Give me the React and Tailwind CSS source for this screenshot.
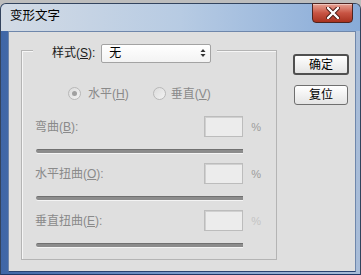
import React from "react";

function Radio({ checked }) {
  return (
    <span className="w-[13px] h-[13px] rounded-full border border-[#b8b8b8] bg-gradient-to-br from-[#dcdcdc] to-[#f2f2f2] flex items-center justify-center shrink-0">
      {checked && <span className="w-[5px] h-[5px] rounded-full bg-[#a0a0a0]" />}
    </span>
  );
}

function Section({ label, mt, pct = "%" }) {
  return (
    <div className={mt}>
      <div className="ml-[13px] flex items-center h-[21px] w-[226px]">
        <span className="flex-1 text-[12px] leading-[14px] text-[#8a8a8a]">{label}</span>
        <div className="w-[39px] h-[21px] border border-[#bcbcbc] bg-[#ececec] shadow-[inset_1px_1px_0_#d0d0d0]" />
        <span className="pl-[8px] text-[11px] leading-[12px] text-[#9c9c9c]">{pct}</span>
      </div>
      <div className="mt-[12px] ml-[14px] w-[207px] h-[4px] rounded-l-[2px] bg-[#8c8c8c] border-t border-[#707070] shadow-[0_1px_0_#f4f4f4]" />
    </div>
  );
}

export default function App() {
  return (
    <div className="w-[361px] h-[275px] overflow-hidden bg-[#bdbdbd] pt-[3px] font-['Liberation_Sans','Noto_Sans_CJK_SC',sans-serif]">
      <div className="w-[361px] h-[272px] rounded-t-[6px] border border-[#33445e] border-b-[#1f3766] bg-gradient-to-r from-[#3f66a6] via-[#7b9ccc] to-[#a9bdd8] flex flex-col">
        <div className="h-[27px] shrink-0 rounded-t-[5px] bg-gradient-to-r from-[#d3dbe5] via-[#b7cbe3] to-[#88abd8] flex items-start justify-between pl-[9px]">
          <span className="mt-[5px] text-[12.5px] leading-[14px] text-black">变形文字</span>
          <div className="-mt-[1px] mr-[7px] w-[41px] h-[20px] rounded-b-[4px] border border-[#4e2420] bg-gradient-to-b from-[#e6a294] via-[#c85443] to-[#a8321f] flex items-center justify-center shadow-[inset_0_1px_0_rgba(255,255,255,0.4)]">
            <svg width="14" height="12" viewBox="0 0 14 12">
              <path d="M2 1 L12 11 M12 1 L2 11" stroke="#4a1a14" strokeWidth="4.2" strokeLinecap="round" />
              <path d="M2 1 L12 11 M12 1 L2 11" stroke="#ffffff" strokeWidth="2.4" strokeLinecap="round" />
            </svg>
          </div>
        </div>
        <div className="ml-[7px] w-[348px] h-[241px] border border-[#6f87ab] border-b-[#2a4270] bg-[#dfdfdf] flex items-start">
          <div className="ml-[12px] mt-[18px] w-[256px] h-[210px] border border-[#b4b4b4] shadow-[inset_1px_1px_0_#f6f6f6] flex flex-col">
            <div className="-mt-[8px] ml-[11px] pl-[19px] h-[20px] w-[184px] bg-[#dfdfdf] flex items-center">
              <span className="text-[12px] leading-[14px] text-[#1a1a1a] whitespace-nowrap">
                样式(<span className="underline">S</span>):
              </span>
              <div className="ml-[6px] w-[110px] h-[19px] rounded-[2px] border border-[#a3a3a3] bg-gradient-to-b from-[#ffffff] to-[#f3f3f3] flex items-center pl-[7px] pr-[4px]">
                <span className="flex-1 text-[12px] leading-[14px] text-black">无</span>
                <svg width="6" height="10" viewBox="0 0 6 10">
                  <path d="M0.5 4 L3 1 L5.5 4 Z" fill="#333" />
                  <path d="M0.5 6 L3 9 L5.5 6 Z" fill="#333" />
                </svg>
              </div>
            </div>
            <div className="mt-[24px] ml-[46px] h-[13px] flex items-center">
              <Radio checked />
              <span className="ml-[7px] text-[12px] leading-[14px] text-[#8a8a8a]">
                水平(<span className="underline">H</span>)
              </span>
              <span className="ml-[24px]"><Radio /></span>
              <span className="ml-[5px] text-[12px] leading-[14px] text-[#8a8a8a]">
                垂直(<span className="underline">V</span>)
              </span>
            </div>
            <Section mt="mt-[16px]" label={<>弯曲(<span className="underline">B</span>):</>} />
            <Section mt="mt-[10px]" label={<>水平扭曲(<span className="underline">O</span>):</>} />
            <Section mt="mt-[10px]" label={<>垂直扭曲(<span className="underline">E</span>):</>} pct={<span className="text-[#c4c4c4]">%</span>} />
          </div>
          <div className="ml-[16px] mt-[22px] flex flex-col">
            <div className="w-[56px] h-[21px] rounded-[3px] border-2 border-[#505050] bg-gradient-to-b from-[#ffffff] to-[#e4e4e4] flex items-center justify-center text-[12px] leading-[14px] text-black">
              确定
            </div>
            <div className="mt-[10px] ml-[1px] w-[54px] h-[20px] rounded-[3px] border border-[#6f6f6f] bg-gradient-to-b from-[#ffffff] to-[#e4e4e4] flex items-center justify-center text-[12px] leading-[14px] text-black">
              复位
            </div>
          </div>
        </div>
      </div>
    </div>
  );
}
